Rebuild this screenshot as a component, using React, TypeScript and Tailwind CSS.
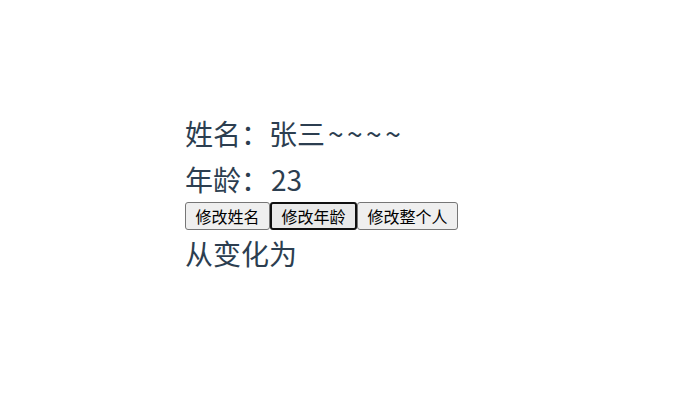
import React, { useState } from 'react';

export default function App() {
  const [tail, setTail] = useState('~~~~');
  const [age, setAge] = useState(23);

  return (
    <div
      className="min-h-[405px] bg-white pt-[110px] pl-[185px] text-[#2c3e50]"
      style={{ fontFamily: '"Microsoft YaHei", "Noto Sans CJK SC", sans-serif' }}
    >
      <div className="text-[28px] leading-[46px]">
        姓名：张三<span className="pl-[3px] tracking-[3.5px]">{tail}</span>
      </div>
      <div className="text-[28px] leading-[46px]">
        年龄：<span className="pl-[2px]">{age}</span>
      </div>
      <div className="flex h-[28px] text-[16px] text-black">
        <button
          onClick={() => setTail(tail + '~')}
          className="h-[28px] px-[9.5px] bg-[#efefef] border border-[#767676] rounded-[3px] leading-none"
        >
          修改姓名
        </button>
        <button
          onClick={() => setAge(age + 1)}
          className="h-[28px] px-[9.5px] bg-[#e9e9e9] border-2 border-[#101010] rounded-[3px] leading-none"
        >
          修改年龄
        </button>
        <button className="h-[28px] px-[9.5px] bg-[#efefef] border border-[#767676] rounded-[3px] leading-none">
          修改整个人
        </button>
      </div>
      <div className="text-[28px] leading-[46px]">从变化为</div>
    </div>
  );
}
